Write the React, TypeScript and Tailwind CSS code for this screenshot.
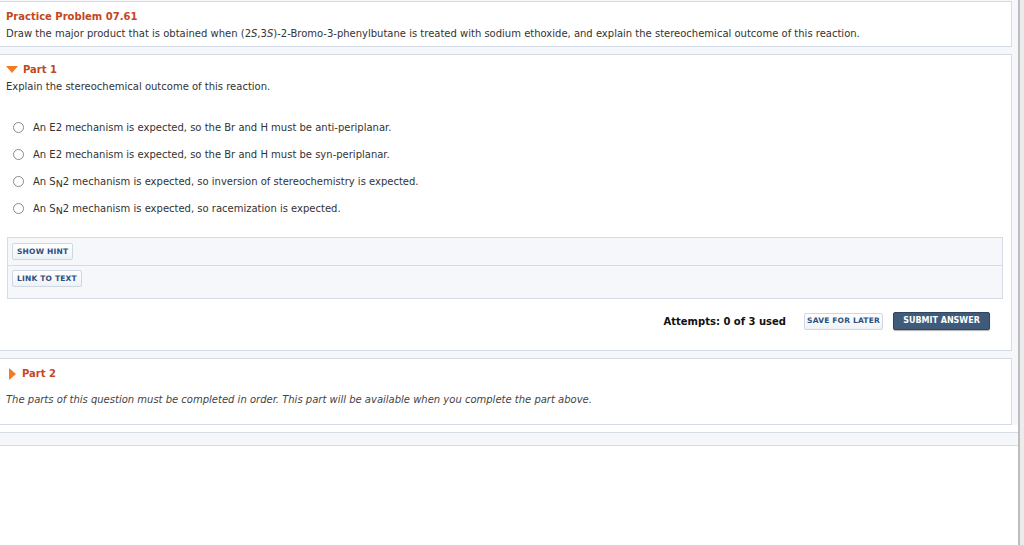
import React from 'react';

const font = { fontFamily: '"DejaVu Sans", Verdana, sans-serif' };

const options = [
  <>An E2 mechanism is expected, so the Br and H must be anti-periplanar.</>,
  <>An E2 mechanism is expected, so the Br and H must be syn-periplanar.</>,
  <>
    An S<sub className="relative top-[2px] align-baseline text-[9.5px]">N</sub>2 mechanism is expected, so inversion of stereochemistry is expected.
  </>,
  <>
    An S<sub className="relative top-[2px] align-baseline text-[9.5px]">N</sub>2 mechanism is expected, so racemization is expected.
  </>,
];

const SmallButton: React.FC<{ label: string; className?: string }> = ({ label, className = 'px-[4px]' }) => (
  <button className={`block h-[17px] ${className} whitespace-nowrap rounded-[2px] border border-[#cfd7e2] bg-gradient-to-b from-white to-[#eef2f7] text-[7.5px] font-bold tracking-[0.2px] text-[#2c4f80] leading-none`}>
    {label}
  </button>
);

export default function App() {
  return (
    <div className="flex w-[1024px] h-[545px] bg-white text-[#333]" style={font}>
      <div className="flex-1 flex flex-col">
        <div className="bg-[#f5f7fa] pt-[1px] pr-[6px] flex flex-col gap-[7px]">
          {/* Problem header */}
          <div className="bg-white border border-l-0 border-[#d6dce5] h-[46px] pl-[6px] pt-[8px]">
            <div className="text-[10px] font-bold text-[#c4471d] leading-[13px]">Practice Problem 07.61</div>
            <div className="text-[10px] leading-[13px] mt-[4px]">
              Draw the major product that is obtained when (2<i>S</i>,3<i>S</i>)-2-Bromo-3-phenylbutane is treated with sodium ethoxide, and explain the stereochemical outcome of this reaction.
            </div>
          </div>

          {/* Part 1 */}
          <div className="bg-white border border-l-0 border-[#d6dce5] h-[297px] pl-[6px] pr-[8px] pt-[8px] flex flex-col">
            <div className="flex items-center gap-[5px] h-[13px]">
              <svg width="12" height="8" viewBox="0 0 12 8">
                <path d="M0 0 L12 0 L6 7 Z" fill="#f47b20" />
              </svg>
              <span className="text-[10px] font-bold text-[#c4471d]">Part 1</span>
            </div>
            <div className="text-[10px] leading-[13px] mt-[4px]">Explain the stereochemical outcome of this reaction.</div>

            <div className="flex flex-col gap-[14px] mt-[28px] pl-[7px]">
              {options.map((o, i) => (
                <label key={i} className="flex items-center gap-[9px] h-[13px] text-[10px]">
                  <span className="w-[11px] h-[11px] rounded-full border border-[#8a8a8a] bg-white shrink-0" />
                  <span>{o}</span>
                </label>
              ))}
            </div>

            <div className="mt-[22px] ml-[1px] border border-[#d6dce5] bg-[#f5f7fa] flex flex-col">
              <div className="h-[28px] flex items-center pl-[4px] border-b border-[#d6dce5]">
                <SmallButton label="SHOW HINT" />
              </div>
              <div className="h-[32px] pt-[4px] pl-[4px] flex items-start">
                <SmallButton label="LINK TO TEXT" />
              </div>
            </div>

            <div className="flex items-center justify-end mt-[13px] pr-[13px] gap-[18px]">
              <span className="text-[10px] font-bold text-[#111]">Attempts: 0 of 3 used</span>
              <div className="flex items-center gap-[10px]">
                <SmallButton label="SAVE FOR LATER" className="px-0 w-[79px]" />
                <button className="h-[18px] w-[97px] whitespace-nowrap rounded-[2px] border border-[#2f465f] bg-[#405b7a] text-[8px] font-bold text-white leading-none shadow-[0_1px_1px_rgba(0,0,0,0.3)]">
                  SUBMIT ANSWER
                </button>
              </div>
            </div>
          </div>

          {/* Part 2 */}
          <div className="bg-white border border-l-0 border-[#d6dce5] h-[67px] pl-[9px] pt-[8px]">
            <div className="flex items-center gap-[6px] h-[13px]">
              <svg width="7" height="12" viewBox="0 0 7 12">
                <path d="M0 0 L7 6 L0 12 Z" fill="#f47b20" />
              </svg>
              <span className="text-[10px] font-bold text-[#c4471d]">Part 2</span>
            </div>
            <div className="text-[10px] italic leading-[13px] mt-[13px] -ml-[3px] text-[#444]">
              The parts of this question must be completed in order. This part will be available when you complete the part above.
            </div>
          </div>
        </div>
        <div className="border-t border-[#d6dce5] h-[13px] bg-[#f5f7fa] mt-[7px]" />
        <div className="border-t border-[#d6dce5] flex-1 bg-white" />
      </div>
      <div className="w-[2px] bg-[#bdbdbd]" />
      <div className="w-[4px] bg-[#ececec]" />
    </div>
  );
}
